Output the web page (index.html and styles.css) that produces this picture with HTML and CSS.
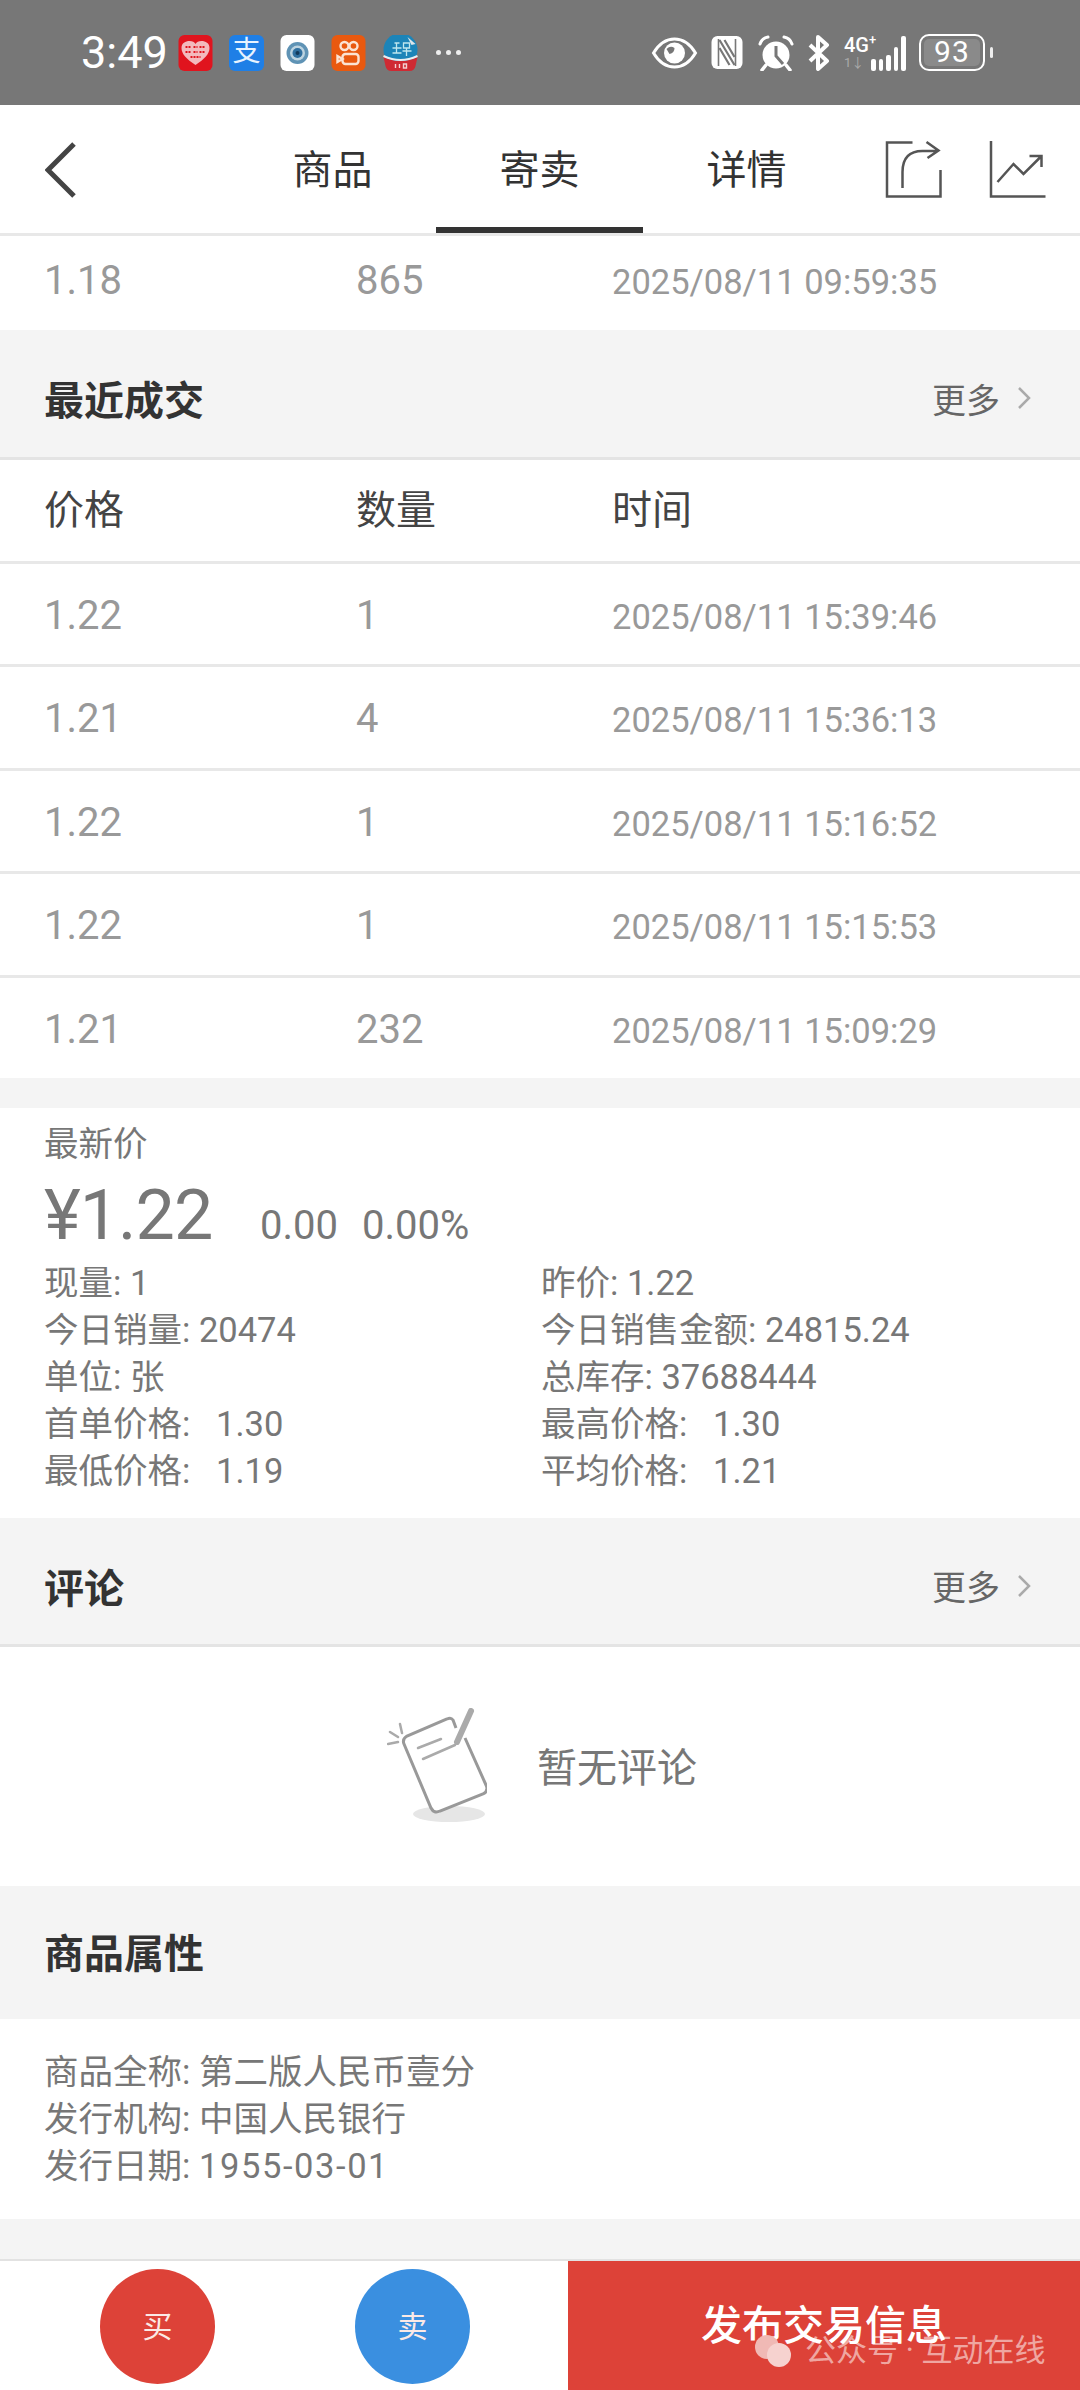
FILE: index.html
```html
<!DOCTYPE html>
<html lang="en">

<head>
	<meta charset="UTF-8">
	<meta name="viewport" content="width=device-width, initial-scale=1.0">
	<title>寄卖</title>
	<link rel="stylesheet" href="styles.css">
</head>

<body>
	<div class="status-bar">
		<span class="clock">3:49</span>
		<div class="app-icons">
			<svg class="app" viewBox="0 0 34 36">
				<rect width="34" height="36" rx="6" fill="#e0141e" />
				<path d="M17 30 C8 24 3 19 3 13 C3 8 7 6 11 6 C14 6 16 7 17 9 C18 7 20 6 23 6 C27 6 31 8 31 13 C31 19 26 24 17 30Z" fill="#f3b9bd" />
				<path d="M7 12h6M15 12h4M21 12h6M7 17h6M15 17h4M21 17h6M12 22h10" stroke="#e0141e" stroke-width="2" stroke-dasharray="2 1" />
			</svg>
			<span class="app app-blue">支</span>
			<svg class="app" viewBox="0 0 34 36">
				<rect width="34" height="36" rx="6" fill="#fff" />
				<circle cx="17" cy="18" r="11" fill="#5f93b5" />
				<circle cx="17" cy="18" r="7.5" fill="#bcd3e0" />
				<circle cx="17" cy="18" r="5" fill="#2f6f9f" />
				<circle cx="17" cy="18" r="2" fill="#12395a" />
			</svg>
			<svg class="app" viewBox="0 0 34 36">
				<rect width="34" height="36" rx="6" fill="#e9590f" />
				<g fill="none" stroke="#fbe3d2" stroke-width="2.4">
					<circle cx="13" cy="11" r="4" />
					<circle cx="22" cy="11" r="4" />
					<rect x="11" y="19" width="16" height="10" rx="3" />
					<path d="M11 24l-5-3v6z" />
				</g>
			</svg>
			<svg class="app app-wide" viewBox="0 0 36 36">
				<circle cx="18" cy="15" r="17" fill="#1c84b8" />
				<path d="M1 22 Q18 30 35 22 L33 31 Q32 36 27 36 H9 Q4 36 3 31Z" fill="#cf2a33" />
				<path d="M1 21 Q18 29 35 21" fill="none" stroke="#e9eef0" stroke-width="2" />
				<path d="M25 2 L33 9 L29 10Z" fill="#dde5ea" />
				<path d="M12 8h5M14 8v10M10 13h9M10 18h9M21 8h6v5h-6zM20 16h9M24 13v8" fill="none" stroke="#bfe6ee" stroke-width="1.3" />
				<path d="M13 33v-4M17 33v-4M21 33h3v-4h-3z" fill="none" stroke="#f3d0d2" stroke-width="1.4" />
			</svg>
			<span class="more-dots"><i></i><i></i><i></i></span>
		</div>
		<div class="sys-icons">
			<svg class="eye" viewBox="0 0 46 32">
				<path d="M2 16 C8 6 15 2 23 2 C31 2 38 6 44 16 C38 26 31 30 23 30 C15 30 8 26 2 16Z" fill="none" stroke="#fff" stroke-width="3" />
				<circle cx="23" cy="16" r="10.5" fill="#fff" />
				<path d="M15 12 Q19 8 23 11 Q23 16 18 17 Z" fill="#777" />
			</svg>
			<svg class="nfc" viewBox="0 0 31 33">
				<rect width="31" height="33" rx="6" fill="#fff" />
				<path d="M8 4 L23 29 M8 12 L18 29 M13 4 L23 21" fill="none" stroke="#777" stroke-width="2.2" />
				<path d="M7 3 V30 M24 3 V30" fill="none" stroke="#777" stroke-width="1.6" />
			</svg>
			<svg class="alarm" viewBox="0 0 36 36">
				<circle cx="18" cy="20" r="13.5" fill="#fff" />
				<path d="M18 11 V21 L25 29" fill="none" stroke="#777" stroke-width="3" />
				<path d="M2 9 Q4 3 10 2 M26 2 Q32 3 34 9" fill="none" stroke="#fff" stroke-width="3" stroke-linecap="round" />
				<path d="M8 30 L4 35 M28 30 L32 35" stroke="#fff" stroke-width="3.5" stroke-linecap="round" />
			</svg>
			<svg class="bluetooth" viewBox="0 0 22 36">
				<path d="M2 10 L19 26 L10 34 V2 L19 10 L2 26" fill="none" stroke="#fff" stroke-width="4" stroke-linejoin="round" />
			</svg>
			<div class="network">
				<span class="net-label">4G<sup>+</sup></span>
				<span class="net-arrows">1↓</span>
			</div>
			<div class="signal"><i></i><i></i><i></i><i></i><i></i></div>
			<div class="battery"><span>93</span></div>
			<i class="battery-nub"></i>
		</div>
	</div>

	<div class="nav-bar">
		<svg class="back" viewBox="0 0 32 56">
			<path d="M29 2 L3 28 L29 54" fill="none" stroke="#444" stroke-width="5" />
		</svg>
		<div class="tabs">
			<div class="tab">商品</div>
			<div class="tab active">寄卖</div>
			<div class="tab">详情</div>
		</div>
		<svg class="nav-icon share" viewBox="0 0 56 57">
			<path d="M27 1.500 H1.500 V55.500 H55 V29" fill="none" stroke="#555" stroke-width="2.500" />
			<path d="M17 47 V31 Q17 10 37 10 H52 M41 1 L53 9.500 L42 17" fill="none" stroke="#555" stroke-width="2.500" />
		</svg>
		<svg class="nav-icon" viewBox="0 0 56 57">
			<path d="M1.500 0 V55.500 H56" fill="none" stroke="#555" stroke-width="2.500" />
			<path d="M8 41 L24 23 L34 33 L52 15 M40 15 H52 V26" fill="none" stroke="#555" stroke-width="2.500" />
		</svg>
	</div>

	<div class="row row-first">
		<span>1.18</span>
		<span>865</span>
		<span class="date">2025/08/11 09:59:35</span>
	</div>

	<div class="section-head recent">
		<h2>最近成交</h2>
		<div class="more">更多
			<svg viewBox="0 0 14 24"><path d="M2 2 L12 12 L2 22" fill="none" stroke="#aaa" stroke-width="2.500" /></svg>
		</div>
	</div>

	<div class="row row-head">
		<span>价格</span>
		<span>数量</span>
		<span>时间</span>
	</div>
	<div class="row">
		<span>1.22</span>
		<span>1</span>
		<span class="date">2025/08/11 15:39:46</span>
	</div>
	<div class="row">
		<span>1.21</span>
		<span>4</span>
		<span class="date">2025/08/11 15:36:13</span>
	</div>
	<div class="row">
		<span>1.22</span>
		<span>1</span>
		<span class="date">2025/08/11 15:16:52</span>
	</div>
	<div class="row">
		<span>1.22</span>
		<span>1</span>
		<span class="date">2025/08/11 15:15:53</span>
	</div>
	<div class="row row-last">
		<span>1.21</span>
		<span>232</span>
		<span class="date">2025/08/11 15:09:29</span>
	</div>

	<div class="quote">
		<div class="quote-label">最新价</div>
		<div class="price-line">
			<span class="price">¥1.22</span>
			<span class="change">0.00</span>
			<span class="change">0.00%</span>
		</div>
		<div class="stats">
			<span>现量: 1</span>
			<span>昨价: 1.22</span>
			<span>今日销量: 20474</span>
			<span>今日销售金额: 24815.24</span>
			<span>单位: 张</span>
			<span>总库存: 37688444</span>
			<span>首单价格: &nbsp; 1.30</span>
			<span>最高价格: &nbsp; 1.30</span>
			<span>最低价格: &nbsp; 1.19</span>
			<span>平均价格: &nbsp; 1.21</span>
		</div>
	</div>

	<div class="section-head comments">
		<h2>评论</h2>
		<div class="more">更多
			<svg viewBox="0 0 14 24"><path d="M2 2 L12 12 L2 22" fill="none" stroke="#aaa" stroke-width="2.500" /></svg>
		</div>
	</div>

	<div class="empty">
		<svg class="empty-icon" viewBox="0 0 100 115">
			<ellipse cx="62" cy="106" rx="36" ry="8" fill="#e6e6e6" />
			<path d="M69 20 L66 12 Q64 9 60 11 L20 28 Q15 31 17 36 L44 100 Q47 106 53 103 L96 86 Q102 83 99 77 L78 30" fill="#fff" stroke="#999" stroke-width="3" />
			<path d="M70 34 L84 3" stroke="#aaa" stroke-width="6" stroke-linecap="round" />
			<path d="M31 40 L54 31 M36 51 L68 37" stroke="#aaa" stroke-width="2.500" stroke-linecap="round" />
			<path d="M15 25 L13 16 M11 29 L3 24 M11 34 L1 36" stroke="#aaa" stroke-width="2.500" stroke-linecap="round" />
		</svg>
		<span>暂无评论</span>
	</div>

	<div class="section-head plain">
		<h2>商品属性</h2>
	</div>

	<div class="props">
		<div>商品全称: 第二版人民币壹分</div>
		<div>发行机构: 中国人民银行</div>
		<div>发行日期: <span class="issue-date">1955-03-01</span></div>
	</div>

	<div class="band"></div>

	<div class="action-bar">
		<div class="round-buttons">
			<div class="round buy">买</div>
			<div class="round sell">卖</div>
		</div>
		<div class="publish">
			发布交易信息
			<div class="mark">
				<svg viewBox="0 0 38 34">
					<ellipse cx="13" cy="13" rx="12" ry="12" fill="#f0b9b5" />
					<ellipse cx="25" cy="21" rx="12" ry="12" fill="#f6d2cf" />
				</svg>
				<span>公众号 · 互动在线</span>
			</div>
		</div>
	</div>
</body>

</html>
```
FILE: styles.css
```css
* {
	box-sizing: border-box;
}

body {
	margin: 0;
	width: 1080px;
	height: 2390px;
	overflow: hidden;
	background-color: #fff;
	font-family: Roboto, "Noto Sans CJK SC", sans-serif;
	color: #777;
}

/* status bar */
.status-bar {
	height: 105px;
	background-color: #777;
	color: #fff;
	display: flex;
	align-items: center;
	padding-left: 81px;
}

.clock {
	font-size: 45px;
	width: 97px;
}

.app-icons {
	display: flex;
	align-items: center;
	gap: 16px;
}

.app {
	width: 35px;
	height: 36px;
	display: block;
}

.app-wide {
	width: 37px;
}

.app-blue {
	background-color: #1f7fe6;
	border-radius: 6px;
	font-size: 28px;
	line-height: 34px;
	text-align: center;
	color: #e7f3ff;
}

.more-dots {
	display: flex;
	gap: 5px;
	margin-left: 1px;
}

.more-dots i {
	width: 5px;
	height: 5px;
	border-radius: 50%;
	background-color: #eee;
}

.sys-icons {
	display: flex;
	align-items: center;
	margin-left: 190px;
}

.eye {
	width: 47px;
	height: 32px;
}

.nfc {
	width: 32px;
	height: 33px;
	margin-left: 13px;
}

.alarm {
	width: 36px;
	height: 36px;
	margin-left: 15px;
}

.bluetooth {
	width: 22px;
	height: 36px;
	margin-left: 14px;
}

.network {
	width: 27px;
	margin-left: 14px;
	display: flex;
	flex-direction: column;
}

.net-label {
	font-size: 20px;
	font-weight: 500;
	line-height: 20px;
	white-space: nowrap;
}

.net-label sup {
	font-size: 13px;
	line-height: 0;
}

.net-arrows {
	font-size: 13px;
	color: #aaa;
	line-height: 16px;
}

.signal {
	display: flex;
	align-items: flex-end;
	gap: 3px;
	height: 36px;
}

.signal i {
	width: 4.6px;
	background-color: #fff;
	border-radius: 2px;
	height: 12px;
}

.signal i:nth-child(3) {
	height: 16px;
}

.signal i:nth-child(4) {
	height: 24px;
}

.signal i:nth-child(5) {
	height: 35px;
}

.battery {
	width: 66px;
	height: 37px;
	margin-left: 13px;
	border: 2.5px solid #fff;
	border-radius: 10px;
	padding: 3px;
}

.battery span {
	display: block;
	height: 100%;
	background-color: #8a8a8a;
	border-radius: 5px;
	font-size: 30px;
	line-height: 26px;
	text-align: center;
	letter-spacing: 1px;
}

.battery-nub {
	width: 3px;
	height: 11px;
	margin-left: 5px;
	background-color: #eee;
	border-radius: 2px;
}

/* navigation */
.nav-bar {
	height: 131px;
	border-bottom: 3px solid #e8e8e8;
	display: flex;
	align-items: flex-start;
	padding-left: 45px;
}

.back {
	width: 32px;
	height: 56px;
	margin-top: 37px;
}

.tabs {
	display: flex;
	margin-left: 152px;
}

.tab {
	width: 207px;
	height: 128px;
	font-size: 40px;
	line-height: 132px;
	text-align: center;
	color: #333;
}

.tab.active {
	border-bottom: 6px solid #333;
}

.nav-icon {
	width: 57px;
	height: 57px;
	margin-top: 36px;
	margin-left: 47px;
}

.share {
	margin-left: 35px;
}

/* table rows */
.row {
	display: grid;
	grid-template-columns: 312px 256px 1fr;
	align-items: center;
	height: 103.5px;
	padding: 3px 0 0 44px;
	border-bottom: 3px solid #e8e8e8;
	font-size: 40px;
	color: #999;
}

.row-first {
	height: 94px;
	padding: 0 0 6px 44px;
	border-bottom: none;
}

.row-last {
	height: 100px;
	border-bottom: none;
}

.row-head {
	padding: 0 0 6px 44px;
	color: #444;
}

.date {
	font-size: 34.5px;
	margin-top: 3px;
}

/* section titles */
.section-head {
	background-color: #f4f4f4;
	border-bottom: 3px solid #e4e4e4;
	display: flex;
	justify-content: space-between;
	align-items: center;
	padding: 0 49px 0 44px;
}

.section-head h2 {
	margin: 0;
	font-size: 40px;
	font-weight: 700;
	color: #333;
}

.recent {
	height: 130px;
	padding-top: 9px;
}

.comments {
	height: 129px;
	padding-top: 10px;
}

.plain {
	height: 133px;
	padding-bottom: 3px;
	border-bottom: none;
}

.more {
	display: flex;
	align-items: center;
	gap: 17px;
	font-size: 34px;
	font-weight: 400;
	color: #666;
}

.more svg {
	width: 14px;
	height: 24px;
}

/* price block */
.quote {
	height: 440px;
	padding: 12px 44px 0;
	border-top: 30px solid #f4f4f4;
	font-size: 34.5px;
	line-height: 47px;
}

.quote-label {
	line-height: 48px;
}

.price-line {
	display: flex;
	align-items: baseline;
	height: 92px;
	padding-top: 3px;
	line-height: 88px;
}

.price {
	font-size: 70px;
	letter-spacing: -1px;
	width: 216px;
}

.change {
	font-size: 40px;
	margin-right: 24px;
}

.stats {
	display: grid;
	grid-template-columns: 497px 1fr;
}

/* comments */
.empty {
	height: 239px;
	display: flex;
	align-items: flex-start;
	padding: 61px 0 0 387px;
	font-size: 40px;
	color: #777;
}

.empty-icon {
	width: 100px;
	height: 115px;
}

.empty span {
	margin: 28px 0 0 50px;
}

.props {
	height: 200px;
	padding: 30px 44px 0;
	font-size: 34.5px;
	line-height: 47px;
}

.issue-date {
	letter-spacing: 1.6px;
}

.band {
	height: 42px;
	background-color: #f4f4f4;
	border-bottom: 2px solid #e2e2e2;
}

/* bottom actions */
.action-bar {
	display: flex;
	height: 130px;
}

.round-buttons {
	width: 568px;
	display: flex;
	gap: 140px;
	padding: 8px 0 0 100px;
}

.round {
	width: 115px;
	height: 115px;
	border-radius: 50%;
	font-size: 30px;
	line-height: 115px;
	text-align: center;
	color: #fbe9e6;
}

.buy {
	background-color: #dd4238;
}

.sell {
	background-color: #3a8fe0;
}

.publish {
	flex: 1;
	position: relative;
	background-color: #dd4238;
	color: #fff;
	font-size: 41px;
	font-weight: 500;
	line-height: 130px;
	text-align: center;
}

.mark {
	position: absolute;
	left: 186px;
	top: 72px;
	display: flex;
	align-items: center;
	gap: 13px;
	font-size: 31px;
	font-weight: 400;
	line-height: 36px;
	white-space: nowrap;
	color: rgba(255, 255, 255, 0.55);
}

.mark svg {
	width: 38px;
	height: 34px;
}
```
